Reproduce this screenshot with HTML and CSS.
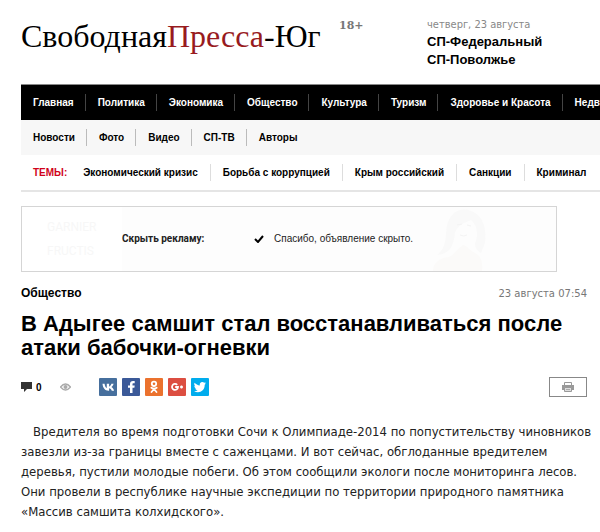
FILE: index.html
```html
<!DOCTYPE html>
<html lang="ru">
<head>
    <meta charset="UTF-8">
    <meta name="viewport" content="width=device-width, initial-scale=1.0">
    <title>В Адыгее самшит стал восстанавливаться после атаки бабочки-огневки</title>
    <link rel="stylesheet" href="styles.css">
</head>
<body>
    <div class="page">
        <header class="header">
            <a class="logo" href="#">Свободная<span>Пресса</span>-Юг</a>
            <div class="age">18+</div>
            <div class="editions">
                <div class="today">четверг, 23 августа</div>
                <a href="#">СП-Федеральный</a>
                <a href="#">СП-Поволжье</a>
            </div>
        </header>

        <nav class="menu menu-main">
            <a href="#">Главная</a>
            <a href="#">Политика</a>
            <a href="#">Экономика</a>
            <a href="#">Общество</a>
            <a href="#">Культура</a>
            <a href="#">Туризм</a>
            <a href="#">Здоровье и Красота</a>
            <a href="#">Недвижимость</a>
        </nav>
        <nav class="menu menu-sub">
            <a href="#">Новости</a>
            <a href="#">Фото</a>
            <a href="#">Видео</a>
            <a href="#">СП-ТВ</a>
            <a href="#">Авторы</a>
        </nav>
        <nav class="menu menu-themes">
            <span class="themes-title">ТЕМЫ:</span>
            <a href="#">Экономический кризис</a>
            <a href="#">Борьба с коррупцией</a>
            <a href="#">Крым российский</a>
            <a href="#">Санкции</a>
            <a href="#">Криминал</a>
        </nav>

        <main class="content">
            <div class="ad">
                <div class="ad-brand"><span>GARNIER</span><span>FRUCTIS</span></div>
                <b class="ad-hide">Скрыть рекламу:</b>
                <svg class="ad-check" width="10" height="8" viewBox="0 0 10 8"><path d="M1 4l3 3 5-6" fill="none" stroke="#000" stroke-width="2"/></svg>
                <span class="ad-done">Спасибо, объявление скрыто.</span>
                <svg class="ad-girl" width="60" height="64" viewBox="0 0 60 64">
                    <path d="M4 48C14 40 12 30 14 18 18 4 28 0 38 4c12 4 16 18 14 32l-4 10c-4-2-6-5-6-10 4-8 2-18-4-23-8 3-13 6-16 12-1 12-4 22-18 23z" fill="#f9f9f9"/>
                    <path d="M0 64c0-8 6-13 16-14 5-2 9-9 14-12 5 1 7 6 12 8 6 3 8 9 7 18z" fill="#fbfaf9"/>
                    <path d="M24 18l5-1M34 18l4 1M27 28q4 2 7 0" fill="none" stroke="#f4f4f4"/>
                </svg>
            </div>

            <article>
                <div class="article-info">
                    <a class="section" href="#">Общество</a>
                    <time datetime="08-23T07:54">23 августа 07:54</time>
                </div>
                <h1>В Адыгее самшит стал восстанавливаться после атаки бабочки-огневки</h1>

                <div class="tools">
                    <a class="comments" href="#">
                        <svg width="11" height="10" viewBox="0 0 11 10"><path d="M0 0h11v7H6L3 10V7H0z" fill="#333"/></svg>
                        0
                    </a>
                    <svg class="views" width="11" height="8" viewBox="0 0 11 8"><path d="M.5 4Q5.500-2 10.500 4 5.500 10 .5 4z" fill="none" stroke="#aaa" stroke-width="1.500"/><circle cx="5.500" cy="4" r="2" fill="#aaa"/></svg>
                    <div class="share">
                        <a class="vk" href="#" aria-label="ВКонтакте">
                            <svg viewBox="0 0 18 18"><path d="M9.600 12.700C6 12.700 3.900 10.200 3.500 5.800h2.100c.2 2.300 1 3.700 2.200 4.200V5.800h2.300v2.800c1-.2 1.900-1.400 2.300-2.800h2.200c-.4 1.500-1.300 2.600-2.200 3.200 1 .5 2 1.600 2.700 3.700h-2.300c-.5-1.200-1.400-2.200-2.700-2.400v2.400z" fill="#fff"/></svg>
                        </a>
                        <a class="fb" href="#" aria-label="Facebook">
                            <svg viewBox="0 0 18 18"><path d="M8 15V9.800H6V7.400h2V5.900C8 4 9.100 3 11 3h1.700v2.300h-1.200c-.8 0-1 .3-1 1v1.100h2.200l-.3 2.400h-1.900V15z" fill="#fff"/></svg>
                        </a>
                        <a class="ok" href="#" aria-label="Одноклассники">
                            <svg viewBox="0 0 18 18"><g fill="none" stroke="#fff" stroke-width="1.800" stroke-linecap="round" stroke-linejoin="round"><circle cx="9" cy="5.800" r="2.200"/><path d="M6.300 9.800q2.700 1.800 5.400 0M9 11l-2.500 3M9 11l2.500 3"/></g></svg>
                        </a>
                        <a class="gp" href="#" aria-label="Google+">
                            <svg viewBox="0 0 18 18"><path d="M9.200 6.900A3 3 0 1 0 10 9H7.200" fill="none" stroke="#fff" stroke-width="1.800"/><path d="M13.500 7.500v3M12 9h3" stroke="#fff" stroke-width="1.500"/></svg>
                        </a>
                        <a class="tw" href="#" aria-label="Twitter">
                            <svg viewBox="0 0 18 18"><path d="M15 5.500l-1.300 1.300C13.800 11.500 10.500 14.300 7 14.300c-1.500 0-2.800-.4-4-1.100 1.400.1 2.600-.3 3.600-1-1.100-.1-2-.8-2.300-1.700h1C4.100 10.200 3.300 9.200 3.300 8l1 .2C3.200 7.300 2.900 6 3.600 4.800c1.400 1.600 3.100 2.500 5.200 2.600-.4-2 .8-3.400 2.500-3.400.8 0 1.400.3 1.900.8l1.500-.6-.9 1.300z" fill="#fff"/></svg>
                        </a>
                    </div>
                    <button class="print" type="button" aria-label="Распечатать">
                        <svg width="12" height="10" viewBox="0 0 12 10"><path d="M2.500 3V.5h7V3" fill="#fff" stroke="#999"/><path d="M0 3h12v5H0z" fill="#999"/><path d="M2.500 5.500h7v4h-7z" fill="#ddd" stroke="#999"/><path d="M4 7.500h4" stroke="#aaa"/></svg>
                    </button>
                </div>

                <p class="text">Вредителя во время подготовки Сочи к Олимпиаде-2014 по попустительству чиновников завезли из-за границы вместе с саженцами. И вот сейчас, обглоданные вредителем деревья, пустили молодые побеги. Об этом сообщили экологи после мониторинга лесов. Они провели в республике научные экспедиции по территории природного памятника «Массив самшита колхидского».</p>
            </article>
        </main>
    </div>
</body>
</html>
```

FILE: styles.css
```css
body {
    margin: 0;
    background: #fff;
    color: #000;
    font-family: Arial, "Liberation Sans", sans-serif;
}
a {
    color: inherit;
    text-decoration: none;
}
.page {
    padding-left: 21px;
    overflow: hidden;
}

/* header */
.header {
    display: flex;
    height: 84px;
}
.logo {
    width: 318px;
    padding-top: 18px;
    font: 32px/36px "Liberation Serif", serif;
    white-space: nowrap;
}
.logo span {
    color: #981b1e;
}
.age {
    width: 88px;
    padding-top: 18px;
    color: #777;
    font: bold 11px/16px "DejaVu Serif", serif;
}
.editions {
    padding-top: 16px;
    font-weight: bold;
    font-size: 13px;
    line-height: 18px;
}
.editions a {
    display: block;
}
.today {
    color: #888;
    font: 11px/17px "DejaVu Sans Condensed", "DejaVu Sans", sans-serif;
}

/* menus */
.menu {
    display: flex;
    align-items: center;
    height: 35px;
    font-weight: bold;
    font-size: 10px;
    line-height: 17px;
    white-space: nowrap;
}
.menu a {
    padding: 0 11px 0 12px;
    border-right: 1px solid #bbb;
}
.menu a:last-child {
    border-right: 0;
}
.menu-main {
    background: #000;
    border-top: 1px solid #888;
    color: #fff;
}
.menu-main a {
    border-color: #444;
}
.menu-sub {
    background: #f7f7f7;
}
.menu-themes {
    border-bottom: 2px solid #e5e5e5;
}
.menu-themes a {
    padding: 0 12px;
    border-color: #ddd;
}
.themes-title {
    padding: 0 4px 0 12px;
    color: #d0021b;
}

/* hidden banner */
.content {
    padding: 14px 13px 0 0;
}
.ad {
    display: flex;
    align-items: center;
    height: 64px;
    margin-right: 30px;
    border: 1px solid #d5d5d5;
    background: linear-gradient(90deg, #fff 100px, #fdfdfd 100px);
    color: #222;
    font: 10px/12px Roboto, Arial, sans-serif;
}
.ad-brand {
    display: grid;
    gap: 12px;
    width: 75px;
    padding-left: 25px;
    color: #f7f7f7;
    font-size: 12px;
}
.ad-hide {
    width: 132px;
}
.ad-check {
    margin-right: 10px;
}
.ad-done {
    font-family: Arial, "Liberation Sans", sans-serif;
}
.ad-girl {
    margin-left: 20px;
}

/* article */
.article-info {
    display: flex;
    justify-content: space-between;
    margin-top: 12px;
    line-height: 18px;
}
.section {
    font-weight: bold;
    font-size: 12px;
}
time {
    padding-top: 2px;
    color: #777;
    font: 10px/16px Verdana, "DejaVu Sans", sans-serif;
}
h1 {
    margin: 10px 0 16px;
    font-size: 22px;
    line-height: 24px;
}
.tools {
    display: flex;
    align-items: center;
    height: 22px;
}
.comments {
    display: flex;
    align-items: center;
    gap: 4px;
    width: 39px;
    font-weight: bold;
    font-size: 10px;
}
.share {
    display: flex;
    gap: 5px;
    margin-left: 28px;
}
.share a {
    width: 18px;
    height: 18px;
    border-radius: 1px;
}
.share svg {
    display: block;
}
.vk {
    background: #466f9d;
}
.fb {
    background: #3b5998;
}
.ok {
    background: #eb722e;
}
.gp {
    background: #dc4e41;
}
.tw {
    background: #00aced;
}
.print {
    display: flex;
    align-items: center;
    justify-content: center;
    width: 38px;
    height: 20px;
    margin-left: auto;
    padding: 0;
    border: 1px solid #888;
    background: #fff;
}
.text {
    margin: 24px -8px 0 0;
    color: #222;
    font: 13px/20px "DejaVu Sans Condensed", "DejaVu Sans", sans-serif;
    text-indent: 12px;
}
```
